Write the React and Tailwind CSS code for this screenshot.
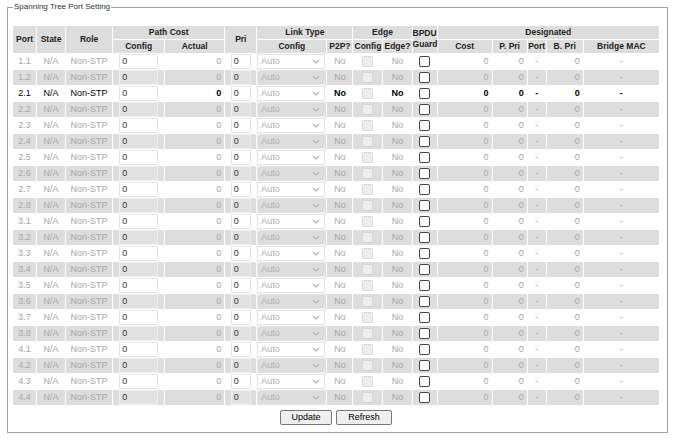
import { useState } from "react";

const ports = [
  "1.1", "1.2",
  "2.1", "2.2", "2.3", "2.4", "2.5", "2.6", "2.7", "2.8",
  "3.1", "3.2", "3.3", "3.4", "3.5", "3.6", "3.7", "3.8",
  "4.1", "4.2", "4.3", "4.4",
];

// only the linked port is shown in black
const activePort = "2.1";

const Chevron = () => (
  <svg width="8" height="5" viewBox="0 0 8 5" className="absolute right-[5px] top-[5px] pointer-events-none">
    <path d="M0.8 0.8 L4 4 L7.2 0.8" fill="none" stroke="#b0b0b0" strokeWidth="1.1" />
  </svg>
);

// read-only number box, looks like the disabled text input of the switch page
const NumBox = ({ grey, width }) => (
  <span
    className={`block mx-auto h-[15px] pl-[3px] text-left leading-[15px] text-[#333] ${width} ${
      grey ? "bg-[#e2e2e2] shadow-[inset_0_0_0_1px_#eeeeee]" : "bg-white shadow-[inset_0_0_0_1px_#e4e4e4]"
    }`}
  >
    0
  </span>
);

const PortRow = ({ port, index }) => {
  const [guard, setGuard] = useState(false);
  const active = port === activePort;
  const grey = index % 2 === 1;
  const bg = grey ? "bg-[#dddddd]" : "bg-white";
  const txt = active ? "text-black font-bold" : "text-[#a6a6a6]";
  const roleTxt = active ? "text-black" : "text-[#a6a6a6]";

  return (
    <tr className={`${bg} h-[15px]`}>
      <td className={`text-center ${roleTxt}`}>{port}</td>
      <td className={`text-center ${roleTxt}`}>N/A</td>
      <td className={`text-center ${roleTxt}`}>Non-STP</td>
      <td className="p-0">
        <NumBox grey={grey} width="w-[39px]" />
      </td>
      <td className={`text-right pr-[3px] ${txt}`}>0</td>
      <td className="p-0">
        <NumBox grey={grey} width="w-[20px]" />
      </td>
      <td className="p-0">
        <div className="relative w-[68px]">
          <select
            disabled
            defaultValue="auto"
            className="block appearance-none w-[68px] h-[15px] pl-[3px] bg-transparent border border-[#e2e2e2] text-[#b0b0b0] text-[9px] leading-[13px] outline-none"
          >
            <option value="auto">Auto</option>
          </select>
          <Chevron />
        </div>
      </td>
      <td className={`text-center ${txt}`}>No</td>
      <td className="p-0">
        <input
          type="checkbox"
          disabled
          className="block mx-auto appearance-none w-[11px] h-[11px] rounded-[2px] border border-[#d8d8d8] bg-[#eeeeee]"
        />
      </td>
      <td className={`text-center ${txt}`}>No</td>
      <td className="p-0">
        <input
          type="checkbox"
          checked={guard}
          onChange={(e) => setGuard(e.target.checked)}
          className="block mx-auto appearance-none w-[11px] h-[11px] rounded-[2px] border border-[#444] bg-white checked:bg-[#444]"
        />
      </td>
      <td className={`text-right pr-[3px] ${txt}`}>0</td>
      <td className={`text-right pr-[3px] ${txt}`}>0</td>
      <td className={`text-center ${txt}`}>-</td>
      <td className={`text-right pr-[3px] ${txt}`}>0</td>
      <td className={`text-center ${txt}`}>-</td>
    </tr>
  );
};

const App = () => {
  return (
    <div className="w-[680px] h-[444px] bg-white pt-px font-['Liberation_Sans',Arial,sans-serif] text-[9px] text-black">
      <fieldset className="ml-[7px] w-[661px] h-[432px] border border-[#a0a0a0] pl-[4px] pr-[6px] pb-0 pt-0">
        <legend className="ml-[1px] px-[1px] text-[8px] leading-[12px] text-[#333]">
          Spanning Tree Port Setting
        </legend>
        <table className="mt-[12px] w-[648px] table-fixed border-separate border-spacing-[1px]">
          <colgroup>
            <col className="w-[23px]" />
            <col className="w-[28px]" />
            <col className="w-[46px]" />
            <col className="w-[51px]" />
            <col className="w-[59px]" />
            <col className="w-[31px]" />
            <col className="w-[69px]" />
            <col className="w-[25px]" />
            <col className="w-[29px]" />
            <col className="w-[28px]" />
            <col className="w-[24px]" />
            <col className="w-[54px]" />
            <col className="w-[34px]" />
            <col className="w-[18px]" />
            <col className="w-[36px]" />
            <col className="w-[75px]" />
          </colgroup>
          <thead className="font-bold text-[8.5px] text-[#222]">
            <tr className="bg-[#dddddd] h-[13px]">
              <th rowSpan={2}>Port</th>
              <th rowSpan={2}>State</th>
              <th rowSpan={2}>Role</th>
              <th colSpan={2}>Path Cost</th>
              <th rowSpan={2}>Pri</th>
              <th colSpan={2}>Link Type</th>
              <th colSpan={2}>Edge</th>
              <th rowSpan={2} className="leading-[11px] align-top pt-[2px]">
                BPDU
                <br />
                Guard
              </th>
              <th colSpan={5}>Designated</th>
            </tr>
            <tr className="bg-[#dddddd] h-[13px]">
              <th>Config</th>
              <th>Actual</th>
              <th>Config</th>
              <th>P2P?</th>
              <th>Config</th>
              <th>Edge?</th>
              <th>Cost</th>
              <th>P. Pri</th>
              <th>Port</th>
              <th>B. Pri</th>
              <th>Bridge MAC</th>
            </tr>
          </thead>
          <tbody>
            {ports.map((p, i) => (
              <PortRow key={p} port={p} index={i} />
            ))}
          </tbody>
        </table>
        <div className="flex justify-center gap-[4px] mt-[4px] w-[648px]">
          <button className="w-[52px] h-[15px] border border-[#767676] rounded-[2px] bg-[#efefef] text-[9px] leading-[13px] text-black">
            Update
          </button>
          <button className="w-[56px] h-[15px] border border-[#767676] rounded-[2px] bg-[#efefef] text-[9px] leading-[13px] text-black">
            Refresh
          </button>
        </div>
      </fieldset>
    </div>
  );
};

export default App;
